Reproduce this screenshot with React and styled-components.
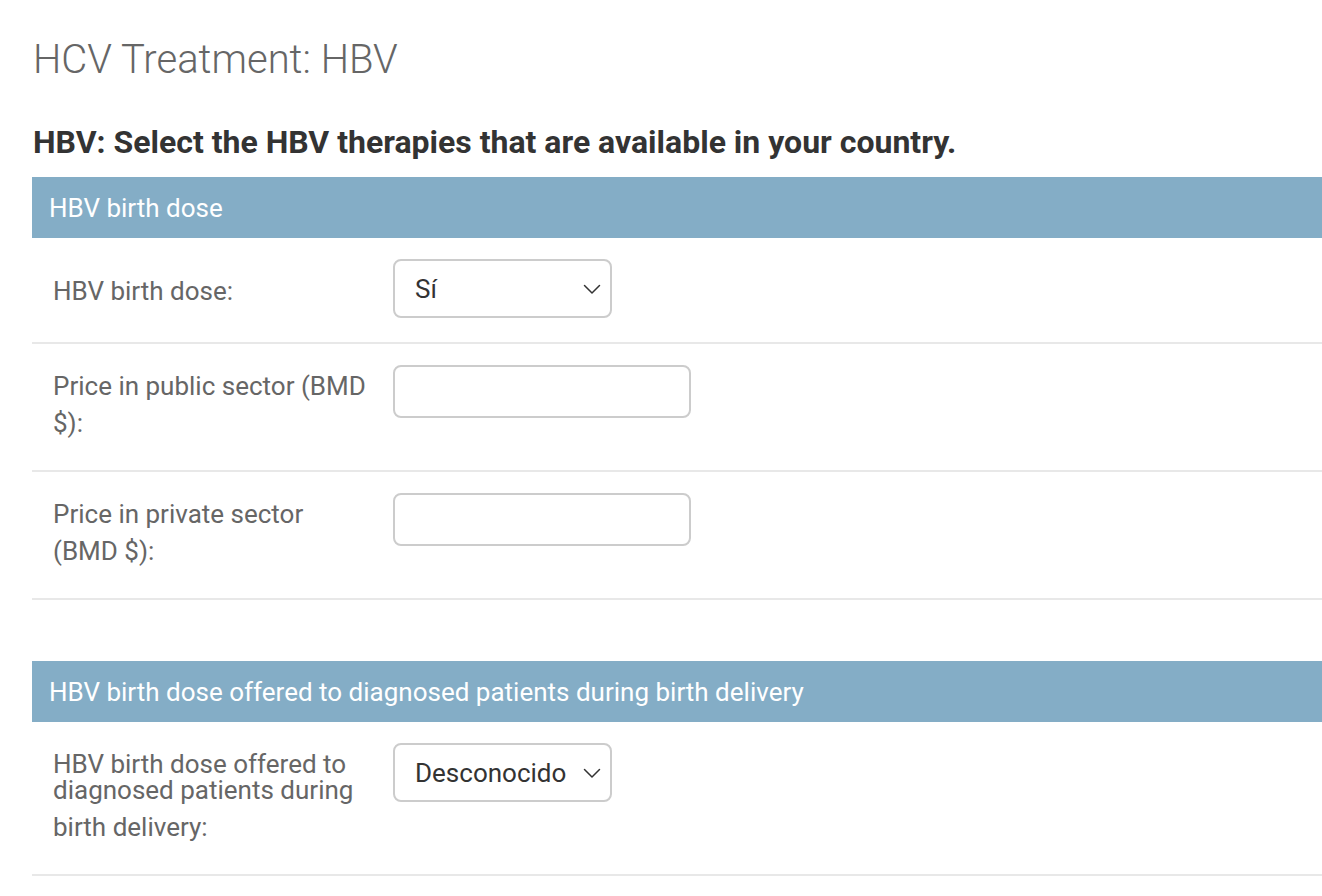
import styled, { createGlobalStyle } from "styled-components";

const GlobalStyle = createGlobalStyle`
  * { box-sizing: border-box; }
  body {
    margin: 0;
    font-family: Roboto, "Liberation Sans", sans-serif;
    background: #ffffff;
    color: #333333;
  }
`;

const Page = styled.div`
  padding: 30px 0 0 32px;
`;

const Title = styled.h1`
  margin: 0 0 33px 1px;
  font-size: 40px;
  font-weight: 300;
  line-height: 60px;
  color: #666666;
`;

const Description = styled.h2`
  margin: 0 0 16px 1px;
  font-size: 32px;
  font-weight: 700;
  line-height: 38px;
  color: #333333;
`;

const Fieldset = styled.section`
  margin-bottom: 61px;
`;

const Caption = styled.h3`
  margin: 0;
  padding: 0 17px;
  height: 61px;
  display: flex;
  align-items: center;
  background: #84adc6;
  color: #ffffff;
  font-size: 26px;
  font-weight: 400;
`;

const Row = styled.div`
  display: flex;
  align-items: flex-start;
  padding: 21px 21px 19px;
  border-bottom: 2px solid #e8e8e8;
`;

/* line-height 1 plus an inline-block on the last line, as the admin form does */
const Label = styled.label`
  display: block;
  box-sizing: content-box;
  width: 320px;
  flex: none;
  padding: 8px 20px 0 0;
  font-size: 26px;
  line-height: 1;
  color: #666666;

  &::after {
    content: "";
    display: inline-block;
    vertical-align: middle;
    height: 52px;
  }
`;

const SelectBox = styled.div`
  position: relative;
  width: ${(p) => p.$w}px;
  height: 59px;
  margin-bottom: 5px;
  border: 2px solid #cccccc;
  border-radius: 8px;
  display: flex;
  align-items: center;
  padding: 0 0 0 20px;
  font-size: 26px;
  color: #333333;
  background: #ffffff;
`;

const Chevron = styled.svg`
  position: absolute;
  right: 8px;
  top: 50%;
  margin-top: -5px;
`;

const Input = styled.div`
  width: 298px;
  height: 53px;
  border: 2px solid #cccccc;
  border-radius: 8px;
  background: #ffffff;
`;

function Select({ value, width }) {
  return (
    <SelectBox $w={width}>
      {value}
      <Chevron width="20" height="11" viewBox="0 0 20 11" fill="none">
        <path d="M2.5 1.5l7.5 7.5 7.5-7.5" stroke="#333" strokeWidth="1.5" strokeLinecap="round" strokeLinejoin="round" />
      </Chevron>
    </SelectBox>
  );
}

export default function App() {
  return (
    <>
      <GlobalStyle />
      <Page>
        <Title>HCV Treatment: HBV</Title>
        <Description>
          HBV: Select the HBV therapies that are available in your country.
        </Description>

        <Fieldset>
          <Caption>HBV birth dose</Caption>
          <Row>
            <Label>HBV birth dose:</Label>
            <Select value="Sí" width={219} />
          </Row>
          <Row>
            <Label>Price in public sector (BMD $):</Label>
            <Input />
          </Row>
          <Row>
            <Label>Price in private sector (BMD $):</Label>
            <Input />
          </Row>
        </Fieldset>

        <Fieldset>
          <Caption>HBV birth dose offered to diagnosed patients during birth delivery</Caption>
          <Row>
            <Label>HBV birth dose offered to diagnosed patients during birth delivery:</Label>
            <Select value="Desconocido" width={219} />
          </Row>
        </Fieldset>
      </Page>
    </>
  );
}
